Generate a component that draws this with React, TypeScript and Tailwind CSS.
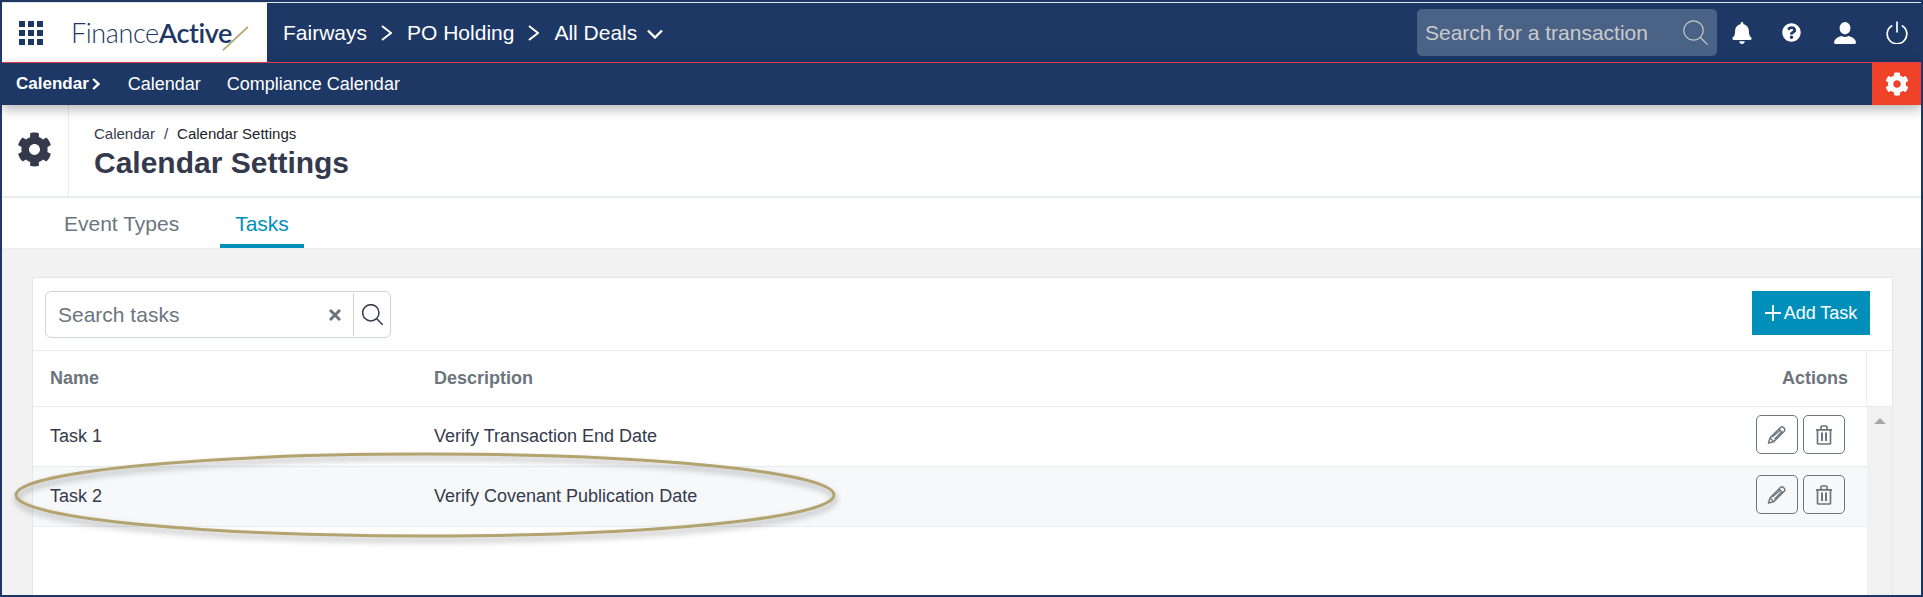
import { FaBell, FaCog, FaQuestionCircle } from "react-icons/fa";

function SearchGlyph(props: { className: string; width?: number }) {
  return (
    <svg viewBox="0 0 25 25" fill="none" stroke="currentColor" strokeWidth={props.width ?? 1.2} className={props.className}>
      <circle cx="10.5" cy="10.5" r="9.7" />
      <path d="M17.5 17.5 24.3 24.3" strokeLinecap="round" />
    </svg>
  );
}

function Chevron() {
  return (
    <svg viewBox="0 0 11 16" fill="none" stroke="white" strokeWidth={2} className="w-[11px] h-[16px] ml-[14px] mr-[15px]">
      <path d="M1 1 10 8 1 15" />
    </svg>
  );
}

function PencilIcon() {
  return (
    <svg viewBox="0 0 20 20" fill="none" stroke="#6c757d" strokeWidth={1.5} className="w-[20px] h-[19px]">
      <path d="M1 19 2.6 13.6 13.6 2.6Q15.2 1.2 16.8 2.6L17.6 3.4Q19 5 17.6 6.6L6.6 17.6Z" strokeLinejoin="round" />
      <path d="M12 4.2 16 8.2M2.6 13.6 6.4 17.4M5 12.6 13.6 5.2M7.4 15 15 7" />
    </svg>
  );
}

function TrashIcon() {
  return (
    <svg viewBox="0 0 16 20" fill="none" stroke="#6c757d" strokeWidth={1.7} className="w-[16px] h-[20px]">
      <path d="M0 4.8h16M5 4.8V2Q5 1 6 1h4Q11 1 11 2v2.8" />
      <path d="M1.5 4.8v13.4Q1.5 19 2.5 19h11q1 0 1-.8V4.8" />
      <path d="M6 7.5v8.5M10 7.5v8.5" strokeWidth={2} />
    </svg>
  );
}

function GridDots() {
  return (
    <div className="grid grid-cols-3 gap-[3px] w-[24px] h-[24px]">
      {[1, 2, 3, 4, 5, 6, 7, 8, 9].map((n) => (
        <div key={n} className="bg-[#1d3865]" />
      ))}
    </div>
  );
}

interface TaskRowProps {
  name: string;
  description: string;
  shaded?: boolean;
}

function TaskRow(props: TaskRowProps) {
  return (
    <div className={`flex h-[60px] border-b border-[#e9ecef] text-[18px] text-[#343a4b] ${props.shaded ? "bg-[#f6f8fa]" : ""}`}>
      <div className="w-[401px] pl-[17px] pt-[19px] leading-[21px]">{props.name}</div>
      <div className="flex-1 pt-[19px] leading-[21px]">{props.description}</div>
      <div className="flex gap-[5px] pt-[8px] pr-[22px]">
        <button className="w-[42px] h-[39px] border border-[#6c757d] rounded-[5px] flex items-center justify-center">
          <PencilIcon />
        </button>
        <button className="w-[42px] h-[39px] border border-[#6c757d] rounded-[5px] flex items-center justify-center">
          <TrashIcon />
        </button>
      </div>
    </div>
  );
}

export default function App() {
  return (
    <div className="relative w-[1923px] h-[597px] border-2 border-[#1d3865] bg-white overflow-hidden flex flex-col font-['Liberation_Sans',Arial,sans-serif]">
      <div className="h-[1px] bg-[#e4e6ea]" />
      <header className="h-[59px] bg-[#1d3865] flex items-center text-white">
        <div className="w-[265px] h-full bg-white flex items-center pl-[17px]">
          <GridDots />
          <div className="ml-[28px] flex items-center font-['Lato',sans-serif] text-[27px] leading-none text-[#1d3865] tracking-[-0.4px]">
            <span className="font-light">Finance</span>
            <span className="font-semibold">Active</span>
            <svg viewBox="0 0 28 26" className="w-[27px] h-[25px] -ml-[10px] mt-[11px]">
              <path d="M1 25 27 1" stroke="#b3a36f" strokeWidth={1.8} />
            </svg>
          </div>
        </div>
        <nav className="flex items-center pl-[16px] text-[21px]">
          <span>Fairways</span>
          <Chevron />
          <span>PO Holding</span>
          <Chevron />
          <span>All Deals</span>
          <svg viewBox="0 0 16 10" fill="none" stroke="white" strokeWidth={2.4} className="w-[16px] h-[10px] ml-[10px] mt-[3px]">
            <path d="M1 1.5 8 8.5 15 1.5" />
          </svg>
        </nav>
        <div className="ml-auto flex items-center">
          <div className="w-[300px] h-[47px] bg-[#4a6285] rounded-[5px] flex items-center pl-[8px] pr-[9px] text-[21px] text-[#c9cbcd]">
            <span>Search for a transaction</span>
            <SearchGlyph className="ml-auto w-[25px] h-[25px]" />
          </div>
          <FaBell className="ml-[15px] w-[20px] h-[22px]" />
          <FaQuestionCircle className="ml-[30px] w-[19px] h-[19px]" />
          <svg viewBox="0 0 22 22" fill="white" className="ml-[33px] w-[22px] h-[22px]">
            <ellipse cx="11" cy="6.2" rx="5.4" ry="6.2" />
            <path d="M0 20.4Q.6 15.6 7.5 14 11 16 14.5 14 21.4 15.6 22 20.4 22 22 20 22H2Q0 22 0 20.4Z" />
          </svg>
          <svg viewBox="0 0 22 23" fill="none" stroke="white" strokeWidth={1.7} className="ml-[30px] mr-[13px] w-[22px] h-[23px]">
            <path d="M11 .5v11M6.2 4.4a9.8 9.8 0 1 0 9.6 0" />
          </svg>
        </div>
      </header>
      <div className="h-[1px] bg-[#f04050]" />
      <div className="relative z-10 h-[42px] shrink-0 bg-[#1d3865] flex items-center text-white text-[18px] shadow-[0_4px_12px_rgba(0,0,0,0.3)]">
        <span className="ml-[14px] font-bold text-[17px]">Calendar</span>
        <svg viewBox="0 0 8 12" fill="none" stroke="white" strokeWidth={2.4} className="ml-[3px] w-[8px] h-[12px]">
          <path d="M1.2 1 6.4 6 1.2 11" />
        </svg>
        <span className="ml-[28px]">Calendar</span>
        <span className="ml-[26px]">Compliance Calendar</span>
        <div className="ml-auto w-[49px] h-full bg-[#f04129] flex items-center justify-center">
          <FaCog className="w-[24px] h-[24px]" />
        </div>
      </div>
      <div className="h-[93px] shrink-0 flex border-b-2 border-[#e9ecef]">
        <div className="w-[67px] border-r border-[#e9ecef] flex justify-center pt-[27px] pr-[1px]">
          <FaCog className="w-[35px] h-[35px] text-[#343a4b]" />
        </div>
        <div className="pl-[25px] pt-[20px]">
          <div className="text-[15px] leading-[18px] text-[#343a4b]">
            Calendar<span className="mx-[9px]">/</span>
            <span className="text-[#212529]">Calendar Settings</span>
          </div>
          <h1 className="mt-[2px] text-[30px] leading-[36px] font-bold text-[#343a4b]">Calendar Settings</h1>
        </div>
      </div>
      <div className="h-[51px] shrink-0 flex pl-[47px] gap-[26px] text-[21px] border-b border-[#e9ecef]">
        <div className="px-[15px] pt-[10px] text-[#6c757d]">Event Types</div>
        <div className="px-[15px] pt-[10px] h-[50px] text-[#008fbb] border-b-4 border-[#008fbb]">Tasks</div>
      </div>
      <main className="flex-1 min-h-0 bg-[#f2f2f2] pl-[30px] pr-[28px] pt-[28px] flex">
        <div className="flex-1 bg-white border-x border-t border-[#e6e6e6] flex flex-col">
          <div className="h-[73px] shrink-0 border-b border-[#e9ecef] flex items-start justify-between pl-[12px] pr-[22px] pt-[13px]">
            <div className="w-[346px] h-[47px] border border-[#ced4da] rounded-[6px] flex items-center text-[#343a4b]">
              <input
                placeholder="Search tasks"
                className="flex-1 min-w-0 pl-[12px] bg-transparent outline-none text-[21px] placeholder:text-[#6c757d]"
              />
              <svg viewBox="0 0 12 12" stroke="#6c757d" strokeWidth={3} className="w-[12px] h-[12px] mr-[12px]">
                <path d="M1 1 11 11M11 1 1 11" />
              </svg>
              <div className="h-[43px] w-[37px] border-l border-[#ced4da] flex items-center justify-center">
                <SearchGlyph className="w-[21px] h-[21px]" width={1.8} />
              </div>
            </div>
            <button className="w-[118px] h-[44px] bg-[#008fbb] text-white text-[18px] flex items-center justify-center gap-[3px]">
              <svg viewBox="0 0 16 16" stroke="white" strokeWidth={1.8} className="w-[16px] h-[16px]">
                <path d="M8 0v16M0 8h16" />
              </svg>
              Add Task
            </button>
          </div>
          <div className="flex-1 min-h-0 flex">
            <div className="flex-1 min-w-0">
              <div className="h-[56px] flex border-b border-[#e9ecef] border-r text-[18px] font-bold text-[#6c757d]">
                <div className="w-[401px] pl-[17px] pt-[17px] leading-[21px]">Name</div>
                <div className="flex-1 pt-[17px] leading-[21px]">Description</div>
                <div className="pr-[18px] pt-[17px] leading-[21px]">Actions</div>
              </div>
              <TaskRow name="Task 1" description="Verify Transaction End Date" />
              <TaskRow name="Task 2" description="Verify Covenant Publication Date" shaded />
            </div>
            <div className="w-[25px] flex flex-col">
              <div className="h-[56px] border-b border-[#e9ecef]" />
              <div className="flex-1 bg-[#f1f1f1] flex justify-center pt-[11px]">
                <div className="w-0 h-0 border-x-[6px] border-x-transparent border-b-[6px] border-b-[#a8a8a8]" />
              </div>
            </div>
          </div>
        </div>
      </main>
      {/* highlight drawn over the second row */}
      <svg viewBox="0 0 830 100" fill="none" className="absolute left-[8px] top-[444px] w-[830px] h-[100px] pointer-events-none drop-shadow-[1px_4px_3px_rgba(0,0,0,0.35)]">
        <ellipse cx="415" cy="49" rx="409" ry="41" stroke="#b3a36f" strokeWidth={3} />
      </svg>
    </div>
  );
}
